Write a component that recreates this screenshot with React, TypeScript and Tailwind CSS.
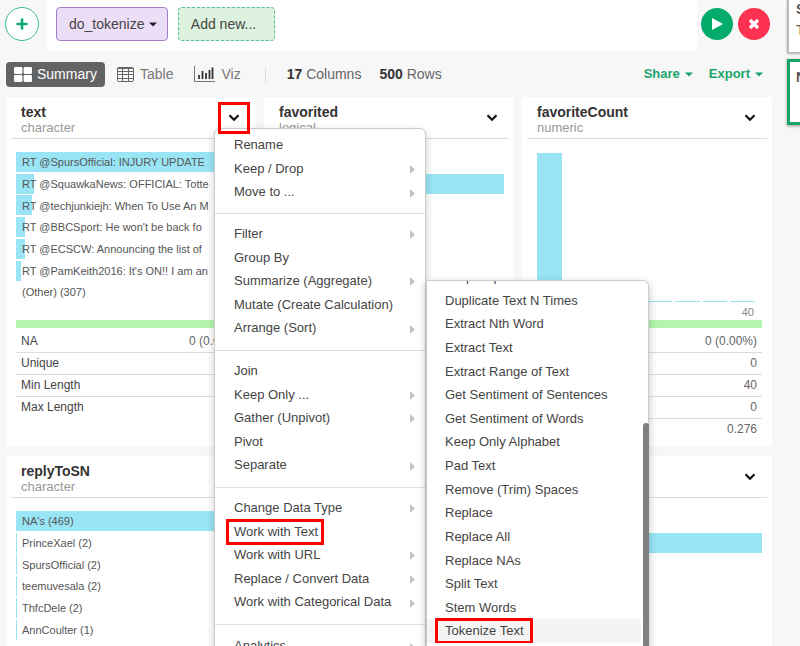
import React from "react";

type MenuEntry = { label: string; sub?: boolean; marked?: boolean };

const menuGroups: MenuEntry[][] = [
  [{ label: "Rename" }, { label: "Keep / Drop", sub: true }, { label: "Move to ...", sub: true }],
  [
    { label: "Filter", sub: true },
    { label: "Group By" },
    { label: "Summarize (Aggregate)", sub: true },
    { label: "Mutate (Create Calculation)" },
    { label: "Arrange (Sort)", sub: true },
  ],
  [
    { label: "Join" },
    { label: "Keep Only ...", sub: true },
    { label: "Gather (Unpivot)", sub: true },
    { label: "Pivot" },
    { label: "Separate", sub: true },
  ],
  [
    { label: "Change Data Type", sub: true },
    { label: "Work with Text", marked: true },
    { label: "Work with URL", sub: true },
    { label: "Replace / Convert Data", sub: true },
    { label: "Work with Categorical Data", sub: true },
  ],
  [{ label: "Analytics", sub: true }],
];

const textMenu = [
  "Drop Duplicates",
  "Duplicate Text N Times",
  "Extract Nth Word",
  "Extract Text",
  "Extract Range of Text",
  "Get Sentiment of Sentences",
  "Get Sentiment of Words",
  "Keep Only Alphabet",
  "Pad Text",
  "Remove (Trim) Spaces",
  "Replace",
  "Replace All",
  "Replace NAs",
  "Split Text",
  "Stem Words",
  "Tokenize Text",
];

type Bar = { label: string; width: number };

const textBars: Bar[] = [
  { label: "RT @SpursOfficial: INJURY UPDATE", width: 100 },
  { label: "RT @SquawkaNews: OFFICIAL: Totte", width: 8 },
  { label: "RT @techjunkiejh: When To Use An M", width: 7 },
  { label: "RT @BBCSport: He won't be back fo", width: 4 },
  { label: "RT @ECSCW: Announcing the list of", width: 4 },
  { label: "RT @PamKeith2016: It's ON!! I am an", width: 2 },
  { label: "(Other) (307)", width: 0 },
];

const replyBars: Bar[] = [
  { label: "NA's (469)", width: 100 },
  { label: "PrinceXael (2)", width: 0.5 },
  { label: "SpursOfficial (2)", width: 0.5 },
  { label: "teemuvesala (2)", width: 0.5 },
  { label: "ThfcDele (2)", width: 0.5 },
  { label: "AnnCoulter (1)", width: 0.5 },
  { label: "", width: 0 },
];

const histogram = [100, 1, 1, 1, 1, 1, 1, 1];

function Highlight({ className }: { className: string }) {
  return <span aria-hidden className={`pointer-events-none absolute border-3 border-[#f00] ${className}`} />;
}

function Chevron() {
  return (
    <svg width="12" height="8" viewBox="0 0 12 8" fill="none" stroke="#111" strokeWidth="2.2">
      <path d="M1.5 1.3 6 5.7l4.5-4.4" />
    </svg>
  );
}

function CaretDown({ className }: { className?: string }) {
  return (
    <svg width="8" height="5" viewBox="0 0 8 5" fill="currentColor" className={className}>
      <path d="M0 .4h8L4 4.6z" />
    </svg>
  );
}

function Card({
  title,
  type,
  marked,
  overlay,
  children,
}: {
  title?: string;
  type?: string;
  marked?: boolean;
  overlay?: React.ReactNode;
  children?: React.ReactNode;
}) {
  return (
    <section className="relative h-[349px] bg-white">
      <header className="mx-[5px] flex h-[42px] items-center justify-between border-b border-[#dcdcdc] pr-[11px] pl-[10px]">
        <div className="pt-1">
          <h2 className="h-4 text-sm leading-4 font-bold text-[#333]">{title}</h2>
          <p className="h-4 text-[13px] leading-4 text-[#999]">{type}</p>
        </div>
        <button
          type="button"
          aria-label={`${title ?? "Column"} menu`}
          className="relative flex h-5 w-3 items-center justify-center"
        >
          <Chevron />
          {marked && <Highlight className="-inset-x-[10px] -inset-y-[6px] z-30" />}
        </button>
      </header>
      {children}
      {overlay}
    </section>
  );
}

function BarList({ bars }: { bars: Bar[] }) {
  return (
    <ul className="mx-[10px] mt-[13px] grid h-[152px] auto-rows-fr text-[11px] text-[#555]">
      {bars.map((bar, i) => (
        <li key={i} className="relative flex items-center pb-px">
          <span className="absolute top-0 left-0 h-5 bg-[#99e5f5]" style={{ width: `${bar.width}%` }} />
          <span className="relative overflow-hidden pl-[6px] whitespace-nowrap">{bar.label}</span>
        </li>
      ))}
    </ul>
  );
}

function Stats({ rows }: { rows: [string, string][] }) {
  return (
    <div className="mx-[10px] text-xs text-[#444]">
      <div className="mb-[2px] h-2 bg-[#b3f5ae]" />
      <table className="w-full border-collapse">
        <tbody>
          {rows.map(([name, value], i) => (
            <tr key={i} className="h-[22px] border-b border-[#dcdcdc] last:border-0">
              <th scope="row" className="p-0 pl-[5px] text-left leading-4 font-normal">
                {name}
              </th>
              <td className="p-0 pr-[5px] text-right leading-4 text-[#666]">{value}</td>
            </tr>
          ))}
        </tbody>
      </table>
    </div>
  );
}

function ColumnMenu() {
  return (
    <div className="absolute top-[31px] left-[208px] z-20 w-[212px] rounded-md border border-[#ccc] bg-white pt-1 text-[13px] text-[#444] shadow-[0_3px_8px_rgba(0,0,0,0.2)]">
      {menuGroups.map((group, g) => (
        <ul
          key={g}
          className={`grid auto-rows-fr border-[#ddd] ${
            g === 0 ? "h-[81px] border-b pb-[9px]" : g === 4 ? "h-[42px] py-[9px]" : "h-[137px] border-b pt-2 pb-[10px]"
          }`}
        >
          {group.map((item) => (
            <li key={item.label}>
              <button type="button" className="relative flex h-full w-full items-center justify-between pr-[10px] pl-[19px]">
                {item.label}
                {item.sub && (
                  <svg width="5" height="9" viewBox="0 0 5 9" fill="#c4c4c4" className="mt-[2px]">
                    <path d="M0 0 5 4.5 0 9z" />
                  </svg>
                )}
                {item.marked && <Highlight className="-top-px left-[11px] h-[26px] w-[98px]" />}
              </button>
            </li>
          ))}
        </ul>
      ))}
      <TextMenu />
    </div>
  );
}

function TextMenu() {
  return (
    <div className="absolute top-[151px] left-[211px] h-[400px] w-[223px] rounded-tr-md border border-[#ccc] bg-white shadow-[0_3px_8px_rgba(0,0,0,0.25)]">
      <div className="flex h-[362px] flex-col justify-end overflow-hidden">
        <ul className="grid h-[378px] shrink-0 auto-rows-fr">
          {textMenu.map((label, i) => (
            <li key={label} className={i === 15 ? "mr-[7px] bg-[#f4f4f4]" : "mr-[7px]"}>
              <button type="button" className="relative flex h-full w-full items-center pl-[18px]">
                {label}
                {i === 15 && <Highlight className="-top-px left-2 h-[26px] w-[98px]" />}
              </button>
            </li>
          ))}
        </ul>
      </div>
      <div className="absolute top-[142px] -right-px bottom-0 w-[6px] rounded-full bg-[#808080]" />
    </div>
  );
}

function TopBar() {
  return (
    <div className="flex h-[51px]">
      <div className="w-[47px] pt-[7px] pl-[5px]">
        <button
          type="button"
          aria-label="Add"
          className="flex size-[34px] items-center justify-center rounded-full border border-[#3cbc8c] bg-white"
        >
          <svg width="12" height="12" viewBox="0 0 12 12" stroke="#0fae70" strokeWidth="2.6">
            <path d="M6 .5v11M.5 6h11" />
          </svg>
        </button>
      </div>
      <div className="flex flex-1 gap-[10px] bg-white pt-[7px] pl-[9px] text-sm text-[#444]">
        <button
          type="button"
          className="flex h-[34px] w-[112px] items-center gap-1 rounded border border-[#a57fc0] bg-[#ecdef7] pl-3"
        >
          do_tokenize
          <CaretDown className="text-[#222]" />
        </button>
        <button
          type="button"
          className="h-[34px] w-[97px] rounded border border-dashed border-[#52c290] bg-[#def3df] pr-[6px]"
        >
          Add new...
        </button>
      </div>
      <div className="flex w-[90px] gap-[5px] pt-2 pl-1">
        <button type="button" aria-label="Run" className="flex size-8 items-center justify-center rounded-full bg-[#04ab6b]">
          <svg width="12" height="12" viewBox="0 0 12 12" fill="#fff">
            <path d="M1 0v12l11-6z" />
          </svg>
        </button>
        <button type="button" aria-label="Cancel" className="flex size-8 items-center justify-center rounded-full bg-[#fd3152]">
          <svg width="10" height="10" viewBox="0 0 10 10" stroke="#fff" strokeWidth="3.4">
            <path d="m1 1 8 8M9 1 1 9" />
          </svg>
        </button>
      </div>
    </div>
  );
}

function ViewBar() {
  return (
    <div className="flex h-[46px] items-center pr-[24px] pl-[6px] text-sm text-[#777]">
      <button type="button" className="flex h-[25px] w-[99px] items-center gap-[5px] rounded-sm bg-[#636363] pl-2 text-white">
        <svg width="18" height="15" viewBox="0 0 18 15" fill="#fff">
          <rect width="8.4" height="7" rx="1.3" />
          <rect x="9.6" width="8.4" height="7" rx="1.3" />
          <rect y="8" width="8.4" height="7" rx="1.3" />
          <rect x="9.6" y="8" width="8.4" height="7" rx="1.3" />
        </svg>
        Summary
      </button>
      <button type="button" className="ml-3 flex items-center gap-[6px]">
        <svg width="17" height="15" viewBox="0 0 17 15" fill="none" stroke="#666">
          <rect x=".5" y=".5" width="16" height="14" rx="1.2" />
          <path d="M.5 1.5h16M.5 4.500h16M.5 7.500h16M.5 11.500h16M5.500 1v13.500M11.500 1v13.500" />
        </svg>
        Table
      </button>
      <button type="button" className="ml-[21px] flex items-center gap-[6px]">
        <svg width="21" height="16" viewBox="0 0 21 16" fill="none" stroke="#777">
          <path d="M.5 0v15.500H21" />
          <path d="M5 13V9M8.500 13V5M12 13V7M15.500 13V4M18.500 13V1.500" stroke="#333" strokeWidth="1.8" />
        </svg>
        Viz
      </button>
      <span className="ml-6 h-[15px] w-px bg-[#ddd]" />
      <span className="ml-[21px] text-[#666]">
        <b className="text-[#333]">17</b> Columns
      </span>
      <span className="ml-[18px] text-[#666]">
        <b className="text-[#333]">500</b> Rows
      </span>
      <div className="ml-auto flex gap-4 text-[13px] font-bold text-[#1ba56c]">
        <button type="button" className="flex items-center gap-[5px]">
          Share <CaretDown />
        </button>
        <button type="button" className="flex items-center gap-[5px]">
          Export <CaretDown />
        </button>
      </div>
    </div>
  );
}

export default function App() {
  return (
    <div className="flex h-screen overflow-hidden bg-[#f7f7f7] font-['Liberation_Sans',Arial,sans-serif]">
      <main className="min-w-0 flex-1">
        <TopBar />
        <ViewBar />
        <div className="grid grid-cols-3 gap-x-2 gap-y-[10px] pr-[15px] pl-[6px]">
          <Card title="text" type="character" marked overlay={<ColumnMenu />}>
            <BarList bars={textBars} />
            <div className="mt-4">
              <Stats
                rows={[
                  ["NA", "0 (0.00%)"],
                  ["Unique", ""],
                  ["Min Length", ""],
                  ["Max Length", ""],
                ]}
              />
            </div>
          </Card>
          <Card title="favorited" type="logical">
            <div className="mx-[10px] mt-[35px] h-5 bg-[#99e5f5]" />
          </Card>
          <Card title="favoriteCount" type="numeric">
            <div className="mt-[14px] mr-[17px] ml-[15px] flex h-[149px] items-end gap-[3px]">
              {histogram.map((height, i) => (
                <span key={i} className="flex-1 bg-[#99e5f5]" style={{ height: `${height}%` }} />
              ))}
            </div>
            <p className="h-[18px] pt-[2px] pr-[18px] text-right text-[11px] leading-4 text-[#888]">40</p>
            <Stats
              rows={[
                ["", "0 (0.00%)"],
                ["", "0"],
                ["", "40"],
                ["", "0"],
                ["", "0.276"],
              ]}
            />
          </Card>
          <Card title="replyToSN" type="character">
            <BarList bars={replyBars} />
          </Card>
          <Card />
          <Card>
            <div className="mx-[10px] mt-[35px] h-5 bg-[#99e5f5]" />
          </Card>
        </div>
      </main>
      <aside className="w-[13px] text-sm text-[#555]">
        <div className="h-[53px] w-[200px] border-b border-l-2 border-[#bbb] bg-white pl-[7px] shadow-[0_1px_2px_rgba(0,0,0,0.3)]">
          <p className="leading-[18px] font-bold">S</p>
          <p className="pt-[3px] leading-[18px]">T</p>
        </div>
        <div className="mt-[6px] h-[66px] w-[200px] border-3 border-[#16a567] bg-white pt-[6px] pl-[6px] shadow-[0_1px_3px_rgba(0,0,0,0.4)]">
          <p className="leading-[18px] font-bold">N</p>
        </div>
      </aside>
    </div>
  );
}
